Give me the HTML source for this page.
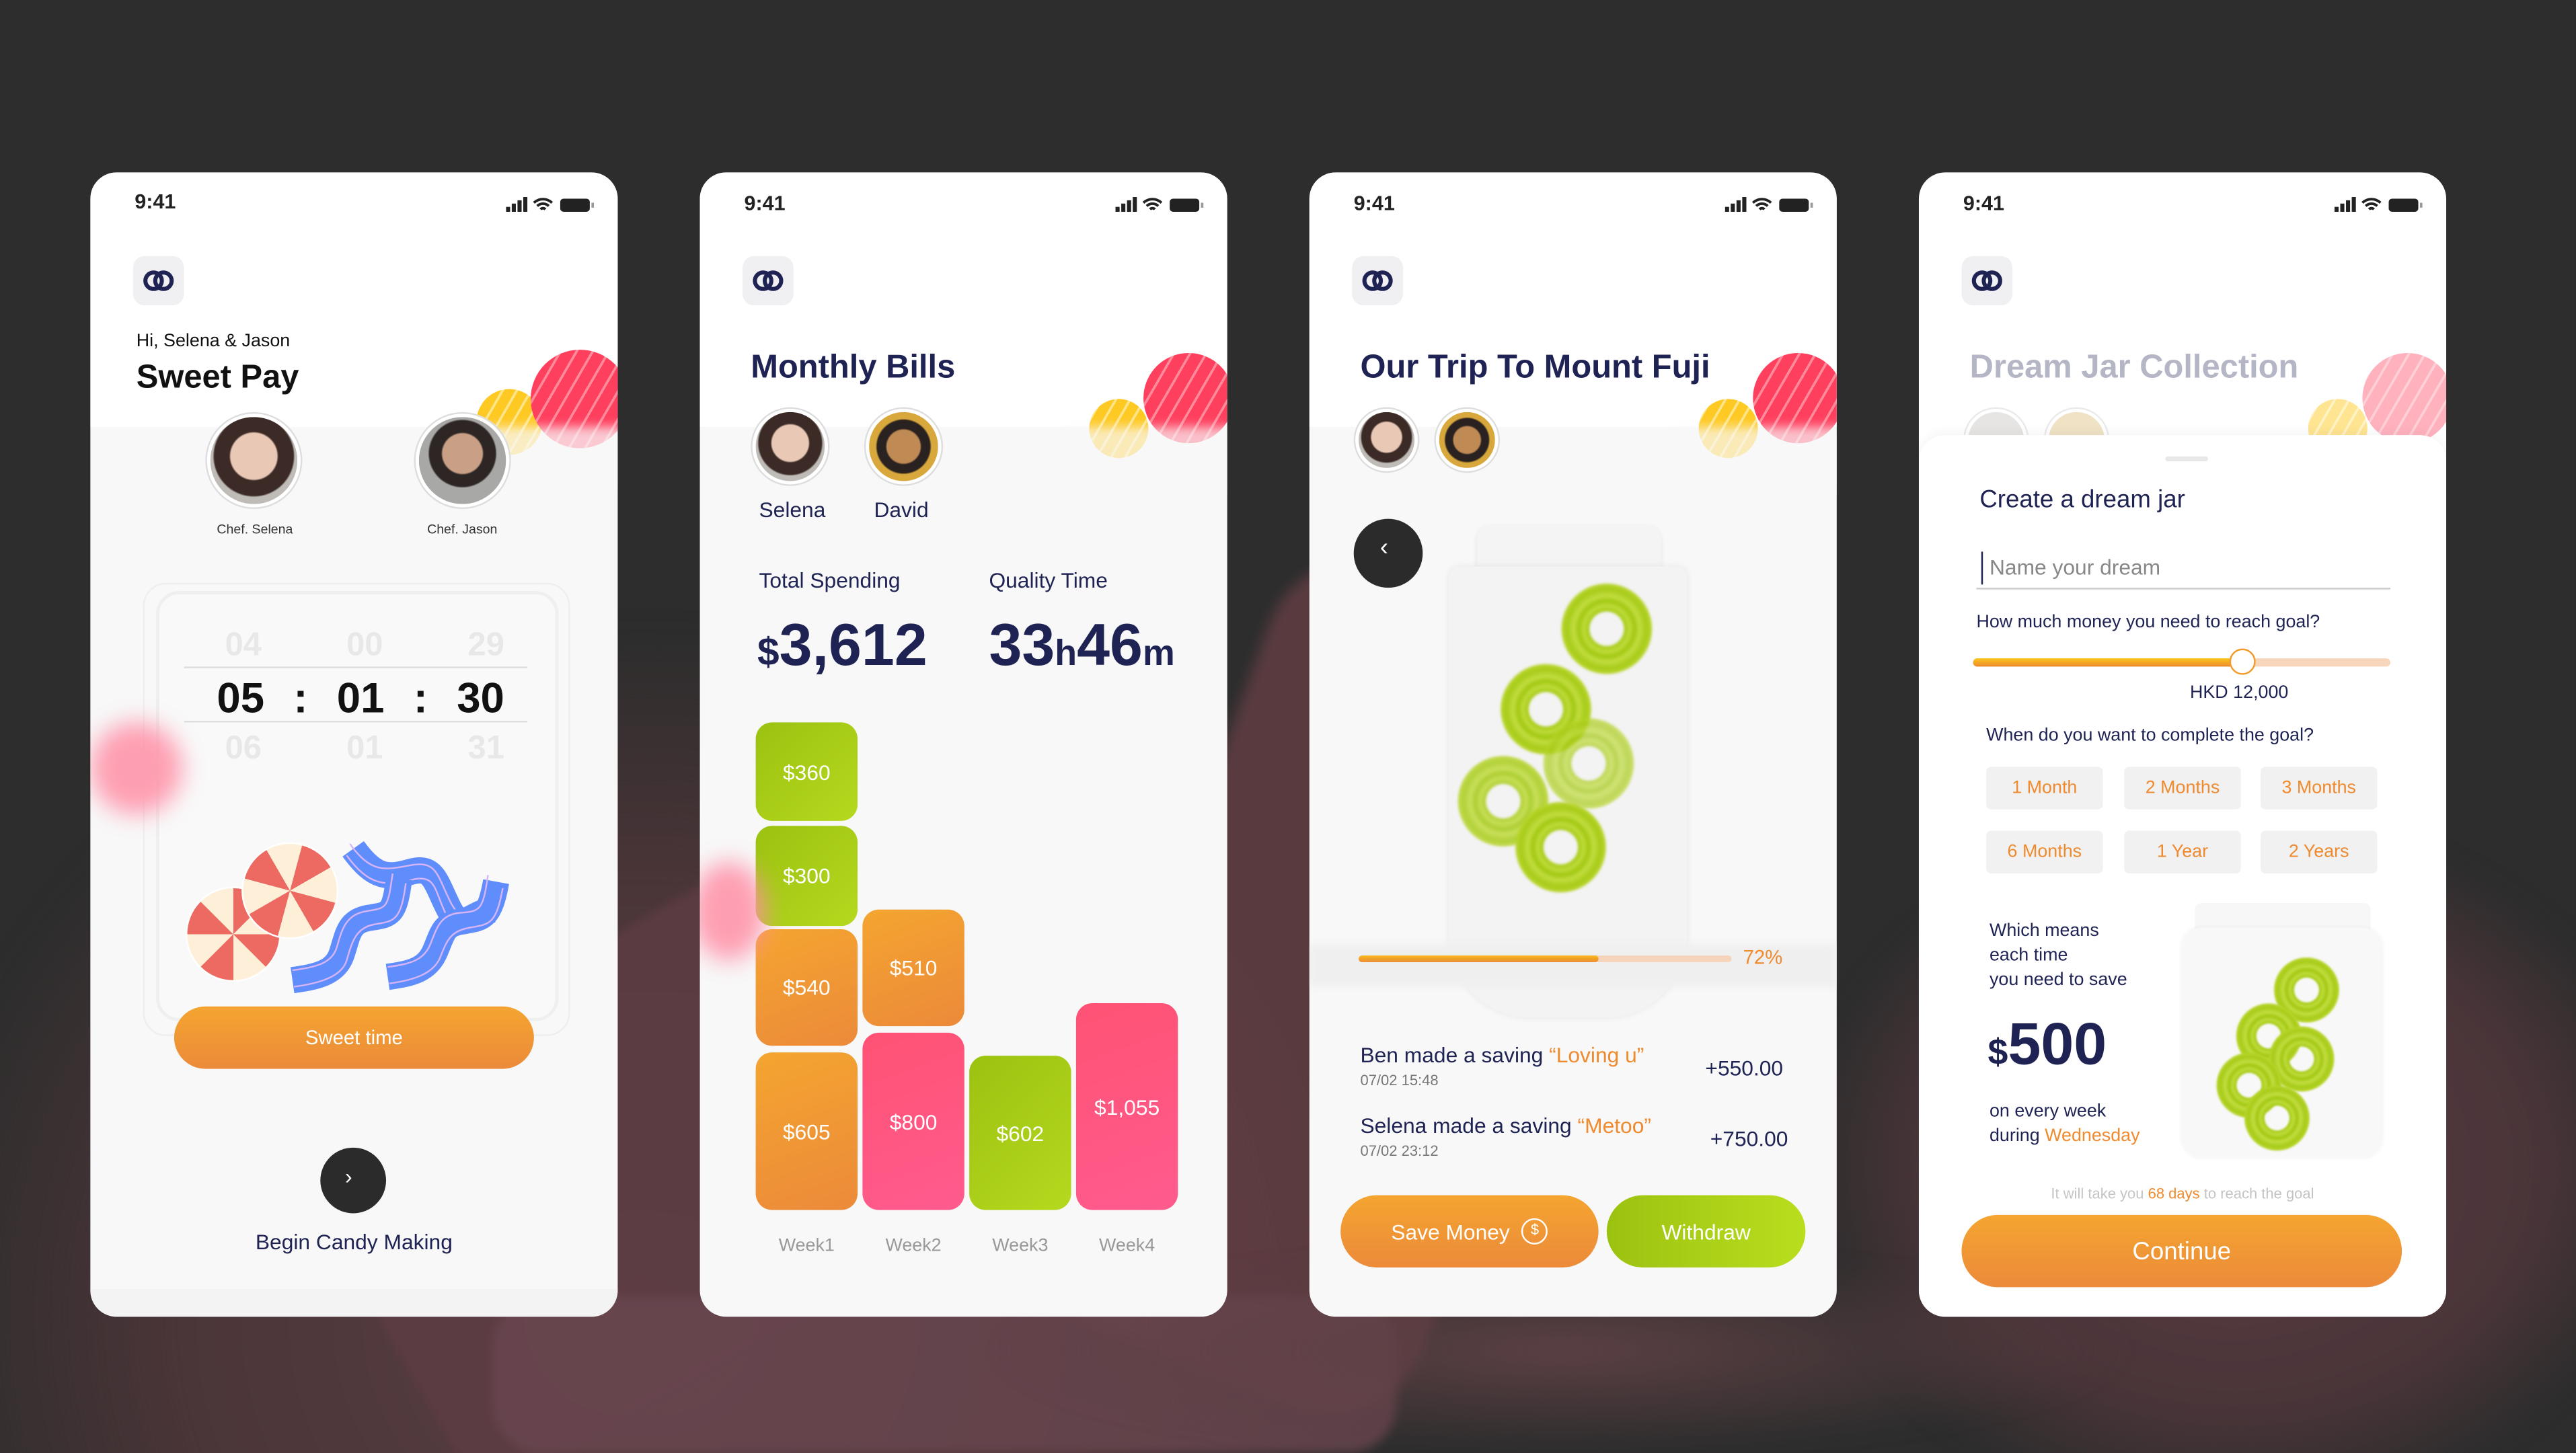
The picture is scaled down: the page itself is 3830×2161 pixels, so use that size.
<!DOCTYPE html>
<html><head><meta charset="utf-8"><style>
*{margin:0;padding:0;box-sizing:border-box}
html,body{width:3830px;height:2161px;overflow:hidden;background:#2d2d2d}
#w{position:absolute;left:0;top:0;width:3830px;height:2161px;overflow:hidden}
#s{position:absolute;left:0;top:0;width:1568px;height:885px;transform:scale(2.4426,2.4418);transform-origin:0 0;font-family:"Liberation Sans",sans-serif;color:#1e2353;overflow:hidden;background:#2d2d2d}
.a{position:absolute}
.ph{position:absolute;top:105px;width:321px;height:697px;border-radius:16px;background:#f8f8f8;overflow:hidden}
.top{position:absolute;left:0;top:0;width:321px;height:155px;background:#fff}
.time{position:absolute;left:27px;top:12px;font-size:12.5px;font-weight:bold;color:#222}
.st{position:absolute;right:13px;top:14px}
.logo{position:absolute;left:26px;top:51px;width:31px;height:30px;background:#f0f0f2;border-radius:7px}
.t{position:absolute;white-space:nowrap}
.ball{position:absolute;border-radius:50%}
.av{position:absolute;border-radius:50%;border:2px solid #fff;box-shadow:0 0 0 1px #ddd}
.bar{position:absolute;border-radius:10px;color:#fff;font-size:13px;display:flex;align-items:center;justify-content:center}
.g{background:linear-gradient(135deg,#9cc211,#b5d91e)}
.o{background:linear-gradient(160deg,#f4a530,#ec8a3a)}
.p{background:linear-gradient(160deg,#ff5274,#ff5b8e)}
.btn{position:absolute;border-radius:22px;color:#fff;display:flex;align-items:center;justify-content:center}
.ring{position:absolute;width:56px;height:56px;border-radius:50%;background:radial-gradient(circle,transparent 0 10px,#a8cc1a 11px,#bedb3a 14px,#a2c812 17px,#c2dd40 20px,#a8cc1a 24px,#b6d42a 27px,transparent 28px);filter:blur(.8px)}
.chip{position:absolute;width:71px;height:26px;background:#f1f1f1;border-radius:3px;color:#ef8a2e;font-size:11px;display:flex;align-items:center;justify-content:center}
.pk{background:repeating-linear-gradient(120deg,#ff3f5e 0 7px,#ff8a9c 7px 8.5px),#ff3f5e}
.yl{background:repeating-linear-gradient(120deg,#ffc924 0 6px,#ffe58a 6px 7.5px)}
</style></head><body><div id="w"><div id="s">
<div class="a" style="left:-60px;top:380px;width:900px;height:700px;border-radius:45%;background:radial-gradient(ellipse at 50% 60%,#5a3f44 0,#4a3538 45%,transparent 70%);filter:blur(10px)"></div>
<div class="a" style="left:200px;top:560px;width:450px;height:260px;background:#5e3d44;border-radius:40px;transform:rotate(-30deg);filter:blur(3px);opacity:.8"></div>
<div class="a" style="left:700px;top:350px;width:240px;height:500px;background:#6c4148;border-radius:60px;transform:rotate(20deg);filter:blur(4px);opacity:.7"></div>
<div class="a" style="left:1100px;top:500px;width:520px;height:420px;border-radius:40%;background:radial-gradient(ellipse,#5a3c42 0,#4a3539 50%,transparent 72%);filter:blur(8px)"></div>
<div class="a" style="left:300px;top:790px;width:550px;height:95px;background:#6a4750;border-radius:30px;filter:blur(3px);opacity:.8"></div>
<div class="a" style="left:600px;top:760px;width:700px;height:125px;background:radial-gradient(ellipse,#5c4044 0,transparent 70%);filter:blur(6px)"></div>

<!-- PHONE 1 -->
<div class="ph" style="left:55px">
<div class="top"></div>
<div class="time" style="top:11px">9:41</div>
<svg class="st" width="55" height="11" viewBox="0 0 55 11"><rect x="0" y="7" width="2.5" height="3" fill="#222"/><rect x="3.5" y="5" width="2.5" height="5" fill="#222"/><rect x="7" y="3" width="2.5" height="7" fill="#222"/><rect x="10.5" y="1" width="2.5" height="9" fill="#222"/><path d="M17 4.5a8 8 0 0 1 11 0M19 6.5a5 5 0 0 1 7 0M21 8.5a2 2 0 0 1 3 0" stroke="#222" stroke-width="1.6" fill="none"/><rect x="33" y="2" width="18" height="8" rx="2" fill="#222"/><rect x="52" y="4.5" width="1.5" height="3" fill="#999"/></svg>
<div class="logo"><svg width="31" height="30"><circle cx="12.5" cy="15" r="5" stroke="#1e2353" stroke-width="2.5" fill="none"/><circle cx="18.5" cy="15" r="5" stroke="#1e2353" stroke-width="2.5" fill="none"/></svg></div>
<div class="t" style="left:28px;top:97px;font-size:11px;color:#111">Hi, Selena &amp; Jason</div>
<div class="t" style="left:28px;top:114px;font-size:20px;font-weight:bold;color:#111">Sweet Pay</div>
<div class="ball yl" style="left:235px;top:132px;width:40px;height:40px"></div>
<div class="ball pk" style="left:268px;top:108px;width:60px;height:60px"></div>
<div class="a" style="left:220px;top:155px;width:110px;height:40px;background:rgba(248,248,248,.75);filter:blur(3px)"></div>
<div class="av" style="left:71px;top:147px;width:57px;height:57px;background:radial-gradient(circle at 50% 45%,#e9c9b6 0 14px,#3b2a25 15px 24px,#bfbcb8 25px)"></div>
<div class="av" style="left:198px;top:147px;width:57px;height:57px;background:radial-gradient(circle at 50% 42%,#c9a085 0 12px,#2d2625 13px 20px,#a8a9a6 21px)"></div>
<div class="t" style="left:77px;top:213px;font-size:8px;color:#333">Chef. Selena</div>
<div class="t" style="left:205px;top:213px;font-size:8px;color:#333">Chef. Jason</div>
<div class="a" style="left:32px;top:250px;width:260px;height:276px;border:1px solid #eee;border-radius:14px"></div>
<div class="a" style="left:40px;top:255px;width:245px;height:262px;border:2px solid #efefef;border-radius:14px;background:#f9f9f9"></div>
<div class="t" style="left:82px;top:277px;font-size:20px;color:#e8e8e8;font-weight:bold;width:170px;display:flex;justify-content:space-between"><span>04</span><span>00</span><span>29</span></div>
<div class="a" style="left:57px;top:301px;width:209px;height:1px;background:#ddd"></div>
<div class="t" style="left:77px;top:305px;font-size:26px;font-weight:bold;color:#111;width:175px;display:flex;justify-content:space-between"><span>05</span><span>:</span><span>01</span><span>:</span><span>30</span></div>
<div class="a" style="left:57px;top:334px;width:209px;height:1px;background:#ddd"></div>
<div class="t" style="left:82px;top:340px;font-size:20px;color:#e8e8e8;font-weight:bold;width:170px;display:flex;justify-content:space-between"><span>06</span><span>01</span><span>31</span></div>
<div class="ball" style="left:58px;top:435px;width:58px;height:58px;border:1.5px solid #fff;background:conic-gradient(#ec6a62 0 45deg,#fdefd8 45deg 90deg,#ec6a62 90deg 135deg,#fdefd8 135deg 180deg,#ec6a62 180deg 225deg,#fdefd8 225deg 270deg,#ec6a62 270deg 315deg,#fdefd8 315deg)"></div>
<div class="ball" style="left:92px;top:408px;width:59px;height:59px;border:1.5px solid #fff;background:conic-gradient(from 15deg,#ec6a62 0 45deg,#fdefd8 45deg 90deg,#ec6a62 90deg 135deg,#fdefd8 135deg 180deg,#ec6a62 180deg 225deg,#fdefd8 225deg 270deg,#ec6a62 270deg 315deg,#fdefd8 315deg)"></div>
<svg class="a" style="left:115px;top:400px" width="150" height="100" viewBox="0 0 150 100">
<g fill="none" stroke-linecap="butt">
<path d="M45 12 C58 30 66 30 80 26 S95 32 103 48 S115 52 130 49" stroke="#5f8dfc" stroke-width="16"/>
<path d="M43 9 C56 27 64 25 80 22 S96 28 104 44 S116 48 130 46" stroke="#d6b4f5" stroke-width="1"/>
<path d="M41 16 C54 34 64 35 80 31 S94 37 102 53 S116 56 130 53" stroke="#d6b4f5" stroke-width="1"/>
<path d="M8 92 C22 90 34 88 38 76 S42 56 55 54 S70 52 73 30" stroke="#5f8dfc" stroke-width="16"/>
<path d="M8 86 C22 84 32 82 35 72 S40 52 53 50 S66 48 69 27" stroke="#d6b4f5" stroke-width="1"/>
<path d="M9 96 C24 94 38 90 41 80 S46 60 58 58 S74 56 77 33" stroke="#d6b4f5" stroke-width="1"/>
<path d="M66 90 C80 88 90 86 95 74 S100 58 112 56 S128 54 132 32" stroke="#5f8dfc" stroke-width="16"/>
<path d="M66 84 C80 82 88 80 92 70 S98 52 110 51 S124 50 127 28" stroke="#d6b4f5" stroke-width="1"/>
<path d="M67 94 C82 92 94 88 98 78 S104 62 116 60 S132 58 136 36" stroke="#d6b4f5" stroke-width="1"/>
</g></svg>
<div class="btn" style="left:51px;top:508px;width:219px;height:38px;border-radius:19px;background:linear-gradient(180deg,#f4a530,#ec8a3a);font-size:12px">Sweet time</div>
<div class="ball" style="left:0;top:335px;width:56px;height:56px;background:#ff8fa6;filter:blur(7px);opacity:.85"></div>
<div class="a" style="left:0;top:680px;width:321px;height:17px;background:#f3f3f3"></div>
<div class="ball" style="left:140px;top:594px;width:40px;height:40px;background:#2b2b2b"></div>
<div class="t" style="left:155px;top:604px;color:#fff;font-size:13px">›</div>
<div class="t" style="left:0;top:644px;width:321px;text-align:center;font-size:13px">Begin Candy Making</div>
</div>

<!-- PHONE 2 -->
<div class="ph" style="left:426px">
<div class="top"></div>
<div class="time">9:41</div>
<svg class="st" width="55" height="11" viewBox="0 0 55 11"><rect x="0" y="7" width="2.5" height="3" fill="#222"/><rect x="3.5" y="5" width="2.5" height="5" fill="#222"/><rect x="7" y="3" width="2.5" height="7" fill="#222"/><rect x="10.5" y="1" width="2.5" height="9" fill="#222"/><path d="M17 4.5a8 8 0 0 1 11 0M19 6.5a5 5 0 0 1 7 0M21 8.5a2 2 0 0 1 3 0" stroke="#222" stroke-width="1.6" fill="none"/><rect x="33" y="2" width="18" height="8" rx="2" fill="#222"/><rect x="52" y="4.5" width="1.5" height="3" fill="#999"/></svg>
<div class="logo"><svg width="31" height="30"><circle cx="12.5" cy="15" r="5" stroke="#1e2353" stroke-width="2.5" fill="none"/><circle cx="18.5" cy="15" r="5" stroke="#1e2353" stroke-width="2.5" fill="none"/></svg></div>
<div class="t" style="left:31px;top:108px;font-size:20px;font-weight:bold">Monthly Bills</div>
<div class="ball yl" style="left:237px;top:138px;width:36px;height:36px"></div>
<div class="ball pk" style="left:270px;top:110px;width:55px;height:55px"></div>
<div class="a" style="left:225px;top:155px;width:100px;height:40px;background:rgba(248,248,248,.7);filter:blur(3px)"></div>
<div class="av" style="left:32px;top:144px;width:46px;height:46px;background:radial-gradient(circle at 50% 45%,#e9c9b6 0 11px,#3b2a25 12px 19px,#bfbcb8 20px)"></div>
<div class="av" style="left:101px;top:144px;width:46px;height:46px;background:radial-gradient(circle at 50% 50%,#c08a55 0 10px,#2a2220 11px 16px,#d9a83c 17px)"></div>
<div class="t" style="left:36px;top:198px;font-size:13px">Selena</div>
<div class="t" style="left:106px;top:198px;font-size:13px">David</div>
<div class="t" style="left:36px;top:241px;font-size:13px">Total Spending</div>
<div class="t" style="left:176px;top:241px;font-size:13px">Quality Time</div>
<div class="t" style="left:35px;top:267px;font-size:36px;font-weight:bold"><span style="font-size:24px">$</span>3,612</div>
<div class="t" style="left:176px;top:267px;font-size:36px;font-weight:bold">33<span style="font-size:22px">h</span>46<span style="font-size:22px">m</span></div>
<div class="bar g" style="left:34px;top:335px;width:62px;height:60px">$360</div>
<div class="bar g" style="left:34px;top:398px;width:62px;height:61px">$300</div>
<div class="bar o" style="left:34px;top:461px;width:62px;height:71px">$540</div>
<div class="bar o" style="left:34px;top:536px;width:62px;height:96px">$605</div>
<div class="bar o" style="left:99px;top:449px;width:62px;height:71px">$510</div>
<div class="bar p" style="left:99px;top:524px;width:62px;height:108px">$800</div>
<div class="bar g" style="left:164px;top:538px;width:62px;height:94px">$602</div>
<div class="bar p" style="left:229px;top:506px;width:62px;height:126px">$1,055</div>
<div class="ball" style="left:-5px;top:420px;width:45px;height:60px;background:#ff8fa6;filter:blur(7px);opacity:.85"></div>
<div class="t" style="left:34px;top:648px;width:62px;text-align:center;font-size:11px;color:#999">Week1</div>
<div class="t" style="left:99px;top:648px;width:62px;text-align:center;font-size:11px;color:#999">Week2</div>
<div class="t" style="left:164px;top:648px;width:62px;text-align:center;font-size:11px;color:#999">Week3</div>
<div class="t" style="left:229px;top:648px;width:62px;text-align:center;font-size:11px;color:#999">Week4</div>
</div>

<!-- PHONE 3 -->
<div class="ph" style="left:797px">
<div class="top"></div>
<div class="time">9:41</div>
<svg class="st" width="55" height="11" viewBox="0 0 55 11"><rect x="0" y="7" width="2.5" height="3" fill="#222"/><rect x="3.5" y="5" width="2.5" height="5" fill="#222"/><rect x="7" y="3" width="2.5" height="7" fill="#222"/><rect x="10.5" y="1" width="2.5" height="9" fill="#222"/><path d="M17 4.5a8 8 0 0 1 11 0M19 6.5a5 5 0 0 1 7 0M21 8.5a2 2 0 0 1 3 0" stroke="#222" stroke-width="1.6" fill="none"/><rect x="33" y="2" width="18" height="8" rx="2" fill="#222"/><rect x="52" y="4.5" width="1.5" height="3" fill="#999"/></svg>
<div class="logo"><svg width="31" height="30"><circle cx="12.5" cy="15" r="5" stroke="#1e2353" stroke-width="2.5" fill="none"/><circle cx="18.5" cy="15" r="5" stroke="#1e2353" stroke-width="2.5" fill="none"/></svg></div>
<div class="t" style="left:31px;top:108px;font-size:20px;font-weight:bold">Our Trip To Mount Fuji</div>
<div class="ball yl" style="left:237px;top:138px;width:36px;height:36px"></div>
<div class="ball pk" style="left:270px;top:110px;width:55px;height:55px"></div>
<div class="a" style="left:225px;top:155px;width:100px;height:40px;background:rgba(248,248,248,.7);filter:blur(3px)"></div>
<div class="av" style="left:28px;top:144px;width:38px;height:38px;background:radial-gradient(circle at 50% 45%,#e9c9b6 0 9px,#3b2a25 10px 15px,#bfbcb8 16px)"></div>
<div class="av" style="left:77px;top:144px;width:38px;height:38px;background:radial-gradient(circle at 50% 50%,#c08a55 0 8px,#2a2220 9px 13px,#d9a83c 14px)"></div>
<div class="ball" style="left:27px;top:211px;width:42px;height:42px;background:#2b2b2b"></div>
<div class="t" style="left:43px;top:220px;color:#fff;font-size:15px">‹</div>
<div class="a" style="left:102px;top:215px;width:112px;height:40px;border-radius:8px;background:#f4f4f4;box-shadow:0 1px 3px rgba(0,0,0,.08)"></div>
<div class="a" style="left:85px;top:240px;width:145px;height:275px;border-radius:6px 6px 50px 50px;background:#f3f3f3;box-shadow:0 0 4px rgba(0,0,0,.07)"></div>
<div class="ring" style="left:153px;top:250px"></div>
<div class="ring" style="left:116px;top:299px"></div>
<div class="ring" style="left:142px;top:332px;opacity:.7"></div>
<div class="ring" style="left:90px;top:355px;opacity:.85"></div>
<div class="ring" style="left:125px;top:383px"></div>
<div class="a" style="left:0;top:470px;width:321px;height:26px;background:#efefef;filter:blur(2px)"></div>
<div class="a" style="left:30px;top:477px;width:227px;height:4px;border-radius:2px;background:#f6d3bb"></div>
<div class="a" style="left:30px;top:477px;width:146px;height:4px;border-radius:2px;background:linear-gradient(#f6b81f,#ec8a2e)"></div>
<div class="t" style="left:264px;top:471px;font-size:12px;color:#ef8a2e">72%</div>
<div class="t" style="left:31px;top:530px;font-size:13px">Ben made a saving <span style="color:#ef8a2e">“Loving u”</span></div>
<div class="t" style="left:31px;top:548px;font-size:9px;color:#777">07/02 15:48</div>
<div class="t" style="left:241px;top:538px;font-size:13px">+550.00</div>
<div class="t" style="left:31px;top:573px;font-size:13px">Selena made a saving <span style="color:#ef8a2e">“Metoo”</span></div>
<div class="t" style="left:31px;top:591px;font-size:9px;color:#777">07/02 23:12</div>
<div class="t" style="left:244px;top:581px;font-size:13px">+750.00</div>
<div class="btn" style="left:19px;top:623px;width:157px;height:44px;background:linear-gradient(180deg,#f4a530,#ec8a3a);font-size:13px">Save Money&nbsp;&nbsp;<span style="display:inline-block;width:16px;height:16px;border:1.5px solid #fff;border-radius:50%;font-size:9px;text-align:center;line-height:13px">$</span></div>
<div class="btn" style="left:181px;top:623px;width:121px;height:44px;background:linear-gradient(90deg,#9cc211,#b9de1e);font-size:13px">Withdraw</div>
</div>

<!-- PHONE 4 -->
<div class="ph" style="left:1168px;background:#fff">
<div class="time">9:41</div>
<svg class="st" width="55" height="11" viewBox="0 0 55 11"><rect x="0" y="7" width="2.5" height="3" fill="#222"/><rect x="3.5" y="5" width="2.5" height="5" fill="#222"/><rect x="7" y="3" width="2.5" height="7" fill="#222"/><rect x="10.5" y="1" width="2.5" height="9" fill="#222"/><path d="M17 4.5a8 8 0 0 1 11 0M19 6.5a5 5 0 0 1 7 0M21 8.5a2 2 0 0 1 3 0" stroke="#222" stroke-width="1.6" fill="none"/><rect x="33" y="2" width="18" height="8" rx="2" fill="#222"/><rect x="52" y="4.5" width="1.5" height="3" fill="#999"/></svg>
<div class="logo"><svg width="31" height="30"><circle cx="12.5" cy="15" r="5" stroke="#1e2353" stroke-width="2.5" fill="none"/><circle cx="18.5" cy="15" r="5" stroke="#1e2353" stroke-width="2.5" fill="none"/></svg></div>
<div class="t" style="left:31px;top:108px;font-size:20px;font-weight:bold;color:#b4b6c6">Dream Jar Collection</div>
<div class="ball yl" style="left:237px;top:138px;width:36px;height:36px;opacity:.5"></div>
<div class="ball pk" style="left:270px;top:110px;width:55px;height:55px;opacity:.4"></div>
<div class="av" style="left:28px;top:144px;width:38px;height:38px;background:#d8d4d2;opacity:.6"></div>
<div class="av" style="left:77px;top:144px;width:38px;height:38px;background:#e6cfa0;opacity:.6"></div>
<div class="a" style="left:0;top:160px;width:321px;height:540px;background:#fff;border-radius:16px 16px 0 0;box-shadow:0 -2px 6px rgba(0,0,0,.04)"></div>
<div class="a" style="left:150px;top:173px;width:26px;height:3px;border-radius:2px;background:#e8e8e8"></div>
<div class="t" style="left:37px;top:191px;font-size:15px">Create a dream jar</div>
<div class="a" style="left:38px;top:231px;width:1px;height:20px;background:#1e2353"></div>
<div class="t" style="left:43px;top:233px;font-size:13px;color:#888">Name your dream</div>
<div class="a" style="left:35px;top:253px;width:252px;height:1px;background:#ccc"></div>
<div class="t" style="left:35px;top:268px;font-size:11px">How much money you need to reach goal?</div>
<div class="a" style="left:33px;top:296px;width:254px;height:5px;border-radius:3px;background:#f7d6bc"></div>
<div class="a" style="left:33px;top:296px;width:165px;height:5px;border-radius:3px;background:linear-gradient(#fcc51c,#ec8a2e)"></div>
<div class="ball" style="left:189px;top:290px;width:16px;height:16px;background:#fff;border:1.5px solid #f09b2a"></div>
<div class="t" style="left:165px;top:311px;font-size:11px">HKD 12,000</div>
<div class="t" style="left:41px;top:337px;font-size:11px">When do you want to complete the goal?</div>
<div class="chip" style="left:41px;top:362px">1 Month</div>
<div class="chip" style="left:125px;top:362px">2 Months</div>
<div class="chip" style="left:208px;top:362px">3 Months</div>
<div class="chip" style="left:41px;top:401px">6 Months</div>
<div class="chip" style="left:125px;top:401px">1 Year</div>
<div class="chip" style="left:208px;top:401px">2 Years</div>
<div class="t" style="left:43px;top:455px;font-size:11px;line-height:15px">Which means<br>each time<br>you need to save</div>
<div class="t" style="left:42px;top:510px;font-size:36px;font-weight:bold"><span style="font-size:22px">$</span>500</div>
<div class="t" style="left:43px;top:565px;font-size:11px;line-height:15px">on every week<br>during <span style="color:#ef8a2e">Wednesday</span></div>
<div class="a" style="left:168px;top:445px;width:107px;height:20px;border-radius:4px;background:#f7f7f7"></div>
<div class="a" style="left:160px;top:460px;width:122px;height:140px;border-radius:12px;background:#f8f8f8;box-shadow:0 0 3px rgba(0,0,0,.06)"></div>
<div class="ring" style="left:208px;top:470px;transform:scale(.72)"></div>
<div class="ring" style="left:185px;top:498px;transform:scale(.72)"></div>
<div class="ring" style="left:205px;top:512px;transform:scale(.72)"></div>
<div class="ring" style="left:173px;top:528px;transform:scale(.72)"></div>
<div class="ring" style="left:190px;top:548px;transform:scale(.72)"></div>
<div class="t" style="left:0;top:617px;width:321px;text-align:center;font-size:9px;color:#c4c4c4">It will take you <span style="color:#ef8a2e">68 days</span> to reach the goal</div>
<div class="btn" style="left:26px;top:635px;width:268px;height:44px;background:linear-gradient(180deg,#f4a530,#ec8a3a);font-size:15px">Continue</div>
</div>
</div></div></body></html>
